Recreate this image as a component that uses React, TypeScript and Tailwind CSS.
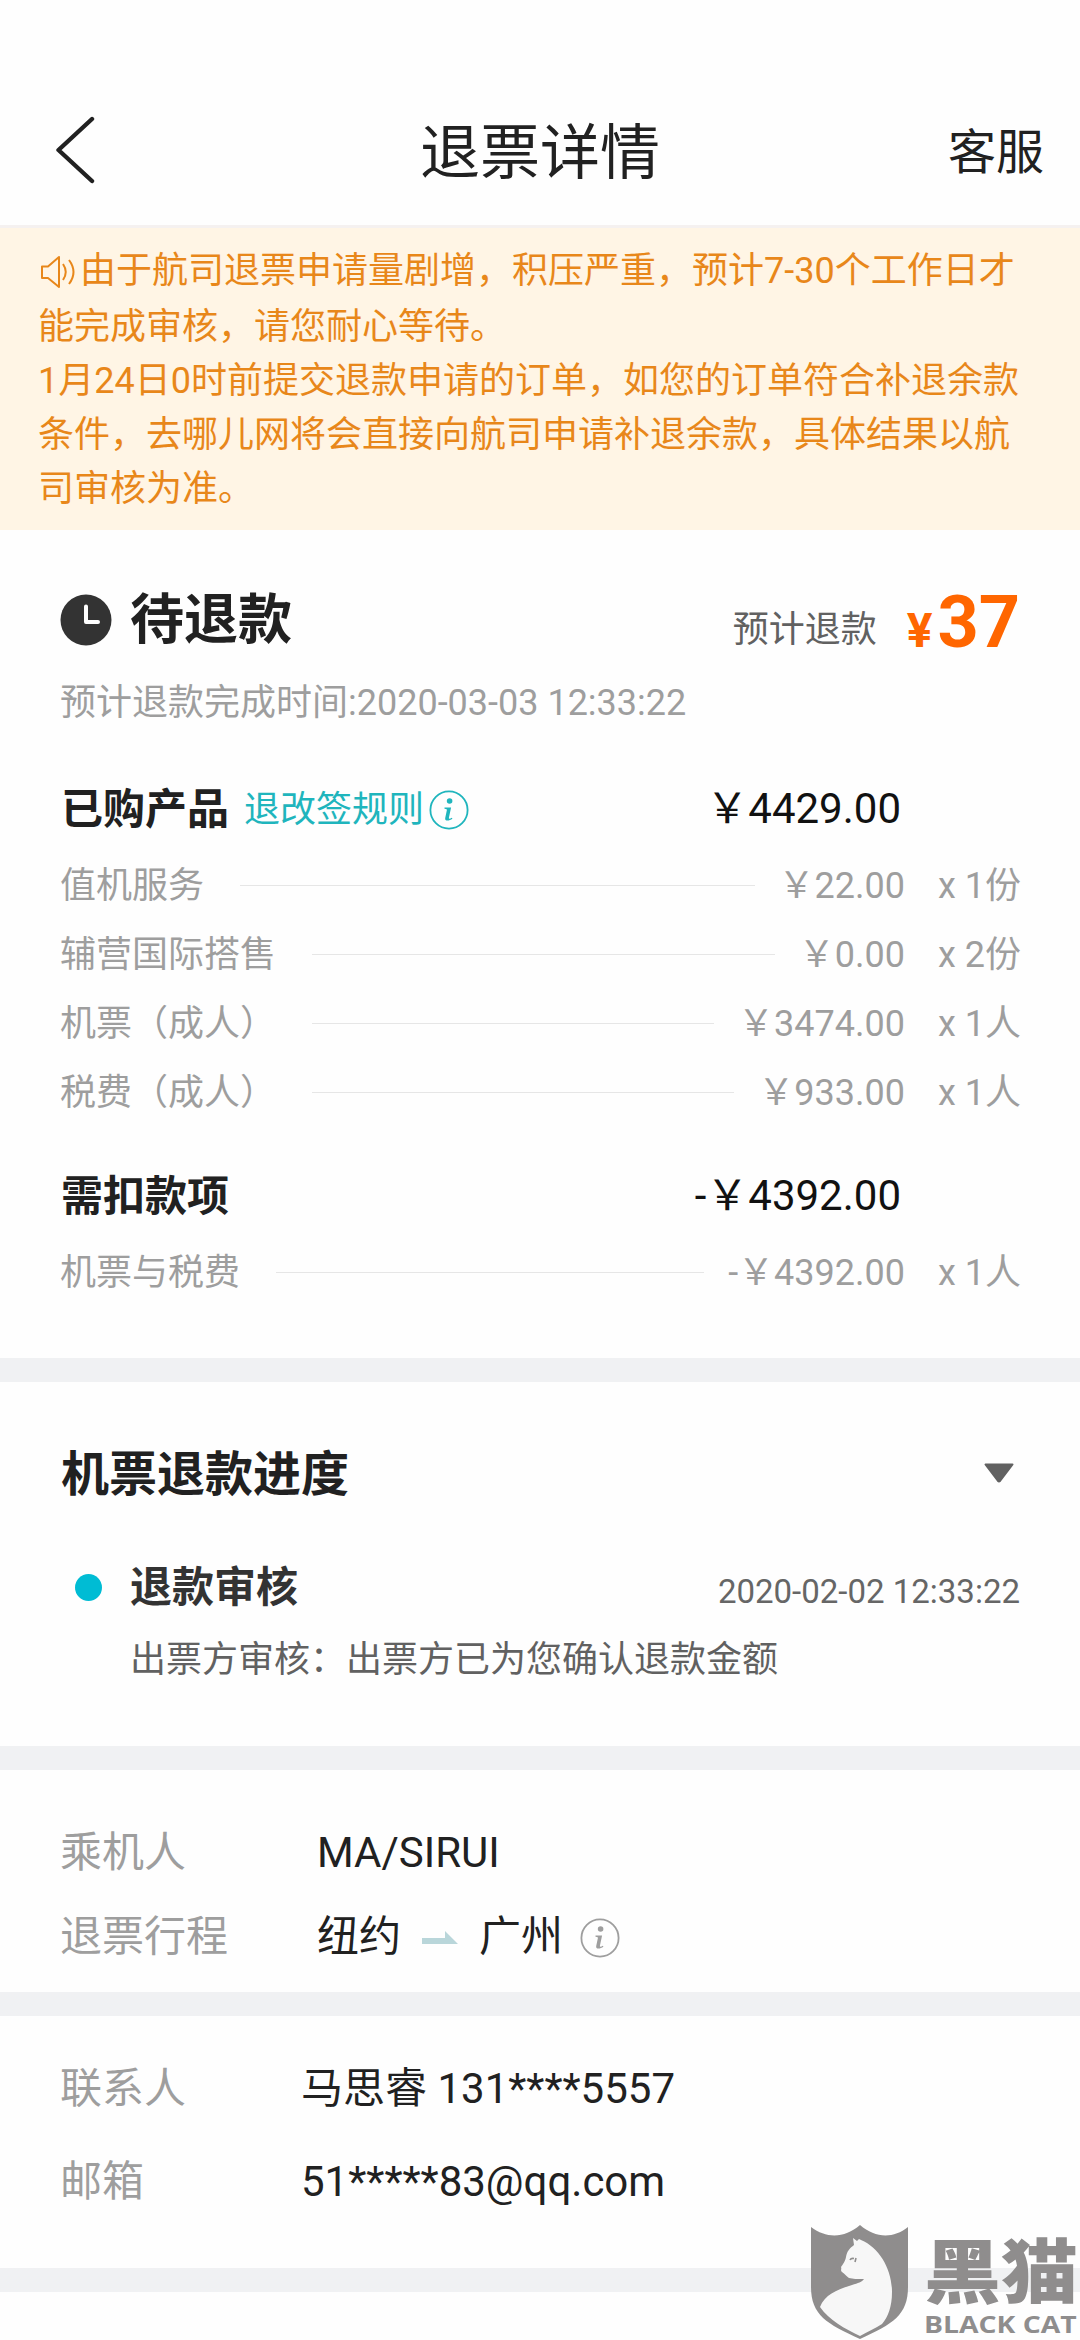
import React from "react";

const Gap = () => <div className="h-6 w-full shrink-0 bg-[#f0f1f3]" />;

const InfoIcon = ({ className }: { className: string }) => (
  <svg viewBox="0 0 40 40" className={className}>
    <circle cx="20" cy="20" r="18.6" fill="none" stroke="currentColor" strokeWidth="1.8" />
    <circle cx="20.6" cy="11" r="2.8" fill="currentColor" />
    <path d="M15.5 17.6h6.6l-2.2 10.2c-.3 1.3.8 1.4 3 0l.5.9c-3.200 2.400-7.900 2.800-7.200-.8l1.700-8c.1-.7-.3-1-2.400-1.200z" fill="currentColor" />
  </svg>
);

const Item = ({ label, price, qty }: { label: string; price: string; qty: string }) => (
  <div className="flex h-[69px] items-center text-[36px] text-[#9e9e9e]">
    <span>{label}</span>
    <span className="ml-9 mr-6 h-px flex-1 bg-[#e6e6e6]" />
    <span>{price}</span>
    <span className="-mr-px ml-[33px]">{qty}</span>
  </div>
);

const Total = ({ children, amount }: { children: React.ReactNode; amount: string }) => (
  <div className="flex h-[69px] items-center justify-between pr-[119px]">
    <div className="flex items-center pl-px pt-[2px]">{children}</div>
    <span className="text-[42px] text-[#111]">{amount}</span>
  </div>
);

const Field = ({ label, labelClass, children }: { label: string; labelClass: string; children: React.ReactNode }) => (
  <div className="flex h-[60px] items-center text-[42px]">
    <span className={labelClass}>{label}</span>
    <div className="flex items-center text-[#212121]">{children}</div>
  </div>
);

const Watermark = () => (
  <div className="absolute bottom-0 right-0 flex h-[116px] w-[269px] text-[#8f8d8d]">
    <svg viewBox="0 0 98 116" className="mt-px h-[116px] w-[98px] shrink-0">
      <path d="M0 2C16 14 34 13 49 0C64 13 82 14 97 2V62C97 90 82 99 49 114C16 99 0 90 0 62Z" fill="currentColor" />
      <path d="M42 13L46 16L48 14L50 15C69 23 81 45 81 67C81 82 77 92 71 99C65 103 56 107 49 111C34 104 18 95 9 82C14 69 28 64 41 60C47 58 51 57 53 54C46 54 42 54 38 53C35 51 34 49 31 47C29 45 31 44 30 42C32 39 34 37 35 32C36 26 39 23 43 20Z" fill="#fff" fillOpacity="0.93" />
      <path d="M39 35q1-2 4-1.500M44 37l1-4" stroke="currentColor" strokeWidth="1.6" fill="none" />
    </svg>
    <div className="ml-[15px] flex w-[156px] flex-col">
      <span className="mt-[7px] block h-[78px] origin-bottom scale-y-[0.91] whitespace-nowrap font-['Liberation_Sans','Noto_Sans_CJK_SC',sans-serif] text-[77px] font-black leading-[78px]">黑猫</span>
      <span className="mt-px block origin-left scale-x-[1.18] whitespace-nowrap font-['Open_Sans',sans-serif] text-[24px] font-bold leading-[28px]">BLACK CAT</span>
    </div>
  </div>
);

export default function App() {
  return (
    <div className="relative flex h-[2340px] w-[1080px] flex-col overflow-hidden whitespace-nowrap bg-[#fefefe] font-['Roboto','Noto_Sans_CJK_SC',sans-serif] leading-none">
      <header className="grid h-[228px] shrink-0 grid-cols-3 items-center border-b-[3px] border-[#f5f1f0] pl-[37px] pr-[36px] pt-[78px] text-[#212121]">
        <svg viewBox="0 0 60 68" className="-mt-[4px] ml-[17px] h-[68px] w-[60px]">
          <path d="M38 3L4.500 34L38 65" fill="none" stroke="currentColor" strokeWidth="4.400" strokeLinecap="round" strokeLinejoin="round" />
        </svg>
        <h1 className="pr-px pt-1 text-center text-[60px]">退票详情</h1>
        <span className="pt-[2px] text-right text-[48px]">客服</span>
      </header>

      <section className="h-[302px] shrink-0 bg-[#fff5e5] pl-[38px] pt-[14px] text-[36px] text-[#e8871a]">
        <p className="flex h-[58px] items-center">
          <svg viewBox="0 0 42 36" className="mt-[2px] h-9 w-[42px]" fill="none" stroke="currentColor" strokeWidth="2">
            <path d="M4 12.500H10L21 3V33L10 24H4Z" strokeLinejoin="round" />
            <path d="M25 10q5.500 8 0 16M31 6q9 12 0 24" />
          </svg>
          由于航司退票申请量剧增，积压严重，预计7-30个工作日才
        </p>
        <p className="flex h-[54px] items-center">能完成审核，请您耐心等待。</p>
        <p className="flex h-[54px] items-center">1月24日0时前提交退款申请的订单，如您的订单符合补退余款</p>
        <p className="flex h-[54px] items-center">条件，去哪儿网将会直接向航司申请补退余款，具体结果以航</p>
        <p className="flex h-[53.5px] items-center">司审核为准。</p>
      </section>

      <section className="h-[828px] shrink-0 px-[60px] pt-[54px]">
        <div className="flex h-[72px] items-center justify-between">
          <div className="flex items-center">
            <svg viewBox="0 0 52 52" className="h-[52px] w-[52px]">
              <circle cx="26" cy="26" r="25.500" fill="#333" />
              <path d="M26 12.500V28H38" fill="none" stroke="#fff" strokeWidth="4" strokeLinecap="round" strokeLinejoin="round" />
            </svg>
            <h2 className="ml-[18px] pt-[2px] text-[54px] font-bold text-[#212121]">待退款</h2>
          </div>
          <div className="flex items-baseline pt-[5px] text-[#ff6600]">
            <span className="relative -top-[5px] mr-[30px] text-[36px] text-[#616161]">预计退款</span>
            <span className="mr-[5px] text-[48px] font-bold">¥</span>
            <span className="text-[72px] font-bold">37</span>
          </div>
        </div>
        <p className="mt-[22px] flex h-[50px] items-center text-[36px] text-[#9e9e9e]">预计退款完成时间:2020-03-03 12:33:22</p>
        <div className="mt-[46px]">
          <Total amount="￥4429.00">
            <h3 className="text-[42px] font-bold text-[#212121]">已购产品</h3>
            <span className="ml-[15px] text-[36px] text-[#1fb5bd]">退改签规则</span>
            <InfoIcon className="ml-[5px] h-10 w-10 text-[#1fb5bd]" />
          </Total>
        </div>
        <div className="mt-[8px]">
          <Item label="值机服务" price="￥22.00" qty="x 1份" />
          <Item label="辅营国际搭售" price="￥0.00" qty="x 2份" />
          <Item label="机票（成人）" price="￥3474.00" qty="x 1人" />
          <Item label="税费（成人）" price="￥933.00" qty="x 1人" />
        </div>
        <div className="mt-[34px]">
          <Total amount="-￥4392.00">
            <h3 className="text-[42px] font-bold text-[#212121]">需扣款项</h3>
          </Total>
        </div>
        <div className="mt-[8px]">
          <Item label="机票与税费" price="-￥4392.00" qty="x 1人" />
        </div>
      </section>
      <Gap />

      <section className="h-[364px] shrink-0 px-[60px] pt-[56px]">
        <div className="flex h-[70px] items-center justify-between pr-[5px]">
          <h2 className="pl-px pt-[3px] text-[48px] font-bold text-[#212121]">机票退款进度</h2>
          <svg viewBox="0 0 32 20" className="h-5 w-8">
            <path d="M2.500 1.500H29.500L17 18Q16 19 15 18Z" fill="#616161" stroke="#616161" strokeWidth="2" strokeLinejoin="round" />
          </svg>
        </div>
        <div className="mt-[49px] flex h-[60px] items-center">
          <span className="ml-[15px] h-[27px] w-[27px] rounded-full bg-[#00bcd4]" />
          <h3 className="ml-[28px] pt-[2px] text-[42px] font-bold text-[#333]">退款审核</h3>
          <span className="ml-auto pt-2 text-[33px] text-[#666]">2020-02-02 12:33:22</span>
        </div>
        <p className="ml-[70px] mt-[18px] flex h-[50px] items-center text-[36px] text-[#616161]">出票方审核：出票方已为您确认退款金额</p>
      </section>
      <Gap />

      <section className="flex h-[222px] shrink-0 flex-col gap-6 px-[60px] pt-[53px]">
        <Field label="乘机人" labelClass="w-[257px] text-[#9e9e9e]">MA/SIRUI</Field>
        <Field label="退票行程" labelClass="w-[257px] text-[#9e9e9e]">
          <span>纽约</span>
          <svg viewBox="0 0 36 14" className="ml-[21px] mt-px h-[14px] w-9">
            <path d="M0 7H23V0L36 13H0Z" fill="#b9d6da" />
          </svg>
          <span className="ml-[21px]">广州</span>
          <InfoIcon className="ml-[17px] mt-px h-10 w-10 text-[#9e9e9e]" />
        </Field>
      </section>
      <Gap />

      <section className="flex h-[252px] shrink-0 flex-col gap-[33px] px-[60px] pt-[43px]">
        <Field label="联系人" labelClass="w-[241px] text-[#9e9e9e]">马思睿 131****5557</Field>
        <Field label="邮箱" labelClass="w-[241px] text-[#9e9e9e]">51*****83@qq.com</Field>
      </section>
      <Gap />
      <Watermark />
    </div>
  );
}
